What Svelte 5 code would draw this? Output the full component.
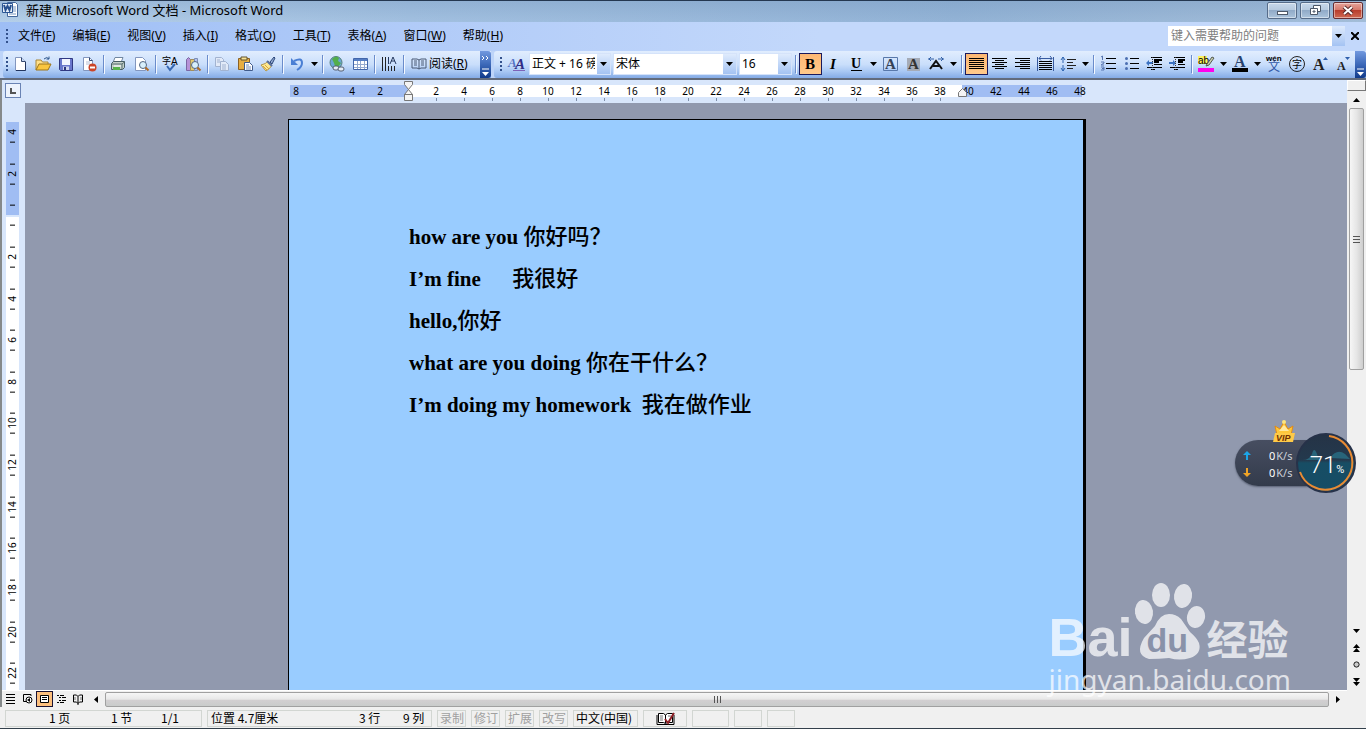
<script lang="ts">
  type Tool = { icon?: string; label?: string; kind?: 'sep' | 'arrow' | 'read'; on?: boolean };

  const sep: Tool = { kind: 'sep' };
  const arrow = (label: string): Tool => ({ kind: 'arrow', label });
  const tool = (icon: string, label: string, on = false): Tool => ({ icon, label, on });

  const menus = [
    ['文件', 'F'],
    ['编辑', 'E'],
    ['视图', 'V'],
    ['插入', 'I'],
    ['格式', 'O'],
    ['工具', 'T'],
    ['表格', 'A'],
    ['窗口', 'W'],
    ['帮助', 'H'],
  ];

  const standard: Tool[] = [
    tool('new', '新建'),
    tool('open', '打开'),
    tool('save', '保存'),
    tool('permission', '权限'),
    sep,
    tool('print', '打印'),
    tool('preview', '打印预览'),
    sep,
    tool('spelling', '拼写和语法'),
    tool('research', '信息检索'),
    sep,
    tool('copy', '复制'),
    tool('paste', '粘贴'),
    tool('brush', '格式刷'),
    sep,
    tool('undo', '撤消'),
    arrow('撤消列表'),
    sep,
    tool('link', '超链接'),
    tool('table', '插入表格'),
    sep,
    tool('direction', '文字方向'),
    sep,
    { kind: 'read' },
  ];

  const formatting: Tool[] = [
    sep,
    tool('bold', '加粗', true),
    tool('italic', '倾斜'),
    tool('underline', '下划线'),
    arrow('下划线样式'),
    tool('border', '字符边框'),
    tool('shade', '字符底纹'),
    tool('scale', '字符缩放'),
    arrow('缩放比例'),
    sep,
    tool('justify', '两端对齐', true),
    tool('center', '居中'),
    tool('right', '右对齐'),
    tool('distribute', '分散对齐'),
    tool('spacing', '行距'),
    arrow('行距选项'),
    sep,
    tool('numbers', '编号'),
    tool('bullets', '项目符号'),
    tool('outdent', '减少缩进量'),
    tool('indent', '增加缩进量'),
    sep,
    tool('highlight', '突出显示'),
    arrow('突出显示颜色'),
    tool('color', '字体颜色'),
    arrow('更多颜色'),
    tool('phonetic', '拼音指南'),
    tool('enclose', '带圈字符'),
    tool('grow', '增大字体'),
    tool('shrink', '缩小字体'),
  ];

  const serif = 'font-family="Liberation Serif, serif" font-weight="bold"';
  const cjk = 'font-family="Noto Sans CJK SC, sans-serif"';
  const lens = '<circle cx="10" cy="9" r="3.5" fill="#d7effc" stroke="#536681"/><path d="M12.5 11.5l3 3" stroke="#b06a25" stroke-width="2"/>';

  const icons: Record<string, string> = {
    new: '<path d="M3.5 1.5h6l4 4v9h-10z" fill="#fff" stroke="#8296be"/><path d="M9.5 1.5v4h4" fill="#c9daf3" stroke="#34486f"/><path d="M13.500 6v8.500H4" fill="none" stroke="#22355e"/>',
    open: '<path d="M1 14V4h5l1.500 2H13v3" fill="#ffe08a" stroke="#a98636"/><path d="M1 14l3-6h12l-3 6z" fill="#fac63f" stroke="#9b741c"/><path d="M9 3q3-3 5 0m0 0V.5m0 2.500h-2.500" fill="none" stroke="#31598d"/>',
    save: '<path d="M1.500 2.500h13v12h-12l-1-1z" fill="#6a77cc" stroke="#303982"/><path d="M4 3h8v6H4z" fill="#f2f4ff"/><path d="M5 10.500h6V14H5z" fill="#d0d6f0"/><path d="M6 11h2v3H6z" fill="#29327b"/>',
    permission: '<path d="M2.500 1.500h6l3 3v10h-9z" fill="#fff" stroke="#8296be"/><path d="M8.500 1.500v3h3" fill="none" stroke="#34486f"/><path d="M5 6h4M5 8h4" stroke="#b5bed3"/><circle cx="11.500" cy="11.500" r="4" fill="#cb4529"/><path d="M9 11.500h5" stroke="#fff" stroke-width="2"/>',
    print: '<path d="M5 1.500h8l-2 5H3z" fill="#fff" stroke="#7187a0"/><path d="M1.500 7.500l2-2h11v6l-2 2h-11z" fill="#c3d0c9" stroke="#465d65"/><path d="M2 8h10v5M12 8l2.500-2" fill="none" stroke="#566c6f"/><path d="M3 11h7v3H3z" fill="#57b34d"/><path d="M4 10h7" stroke="#fff"/>',
    preview: `<path d="M2.500 1.500h7l3 3v10h-10z" fill="#fff" stroke="#8296be"/>${lens}`,
    spelling: `<text x="0" y="8" font-size="9" ${cjk}>字</text><text x="9" y="9" font-size="10" font-family="Liberation Sans, sans-serif">A</text><path d="M5 10l3 4 5-6" fill="none" stroke="#3767b2" stroke-width="2"/>`,
    research: `<path d="M1.500 3.500l2-2 2 2v11h-4z" fill="#b692d8" stroke="#7b67a3"/><path d="M5.500 3.500h4v11h-4z" fill="#e5cb72" stroke="#a28e5a"/><path d="M9.500 2.500h3v12h-3z" fill="#b4c1f0" stroke="#7d8fb5"/>${lens}`,
    copy: '<g fill="#e2eaf8" stroke="#a2b3d0"><path d="M1.500 1.500h6l2 2v7h-8z"/><path d="M6.500 5.500h5l3 3v6h-8z"/><path d="M8 9h4M8 11h4M8 13h4M3 4h3M3 6h3"/></g>',
    paste: '<path d="M1.500 2.500h11v11h-11z" fill="#e6ad43" stroke="#8b6225"/><path d="M4 1h6v3H4z" fill="#f9e394" stroke="#61532e"/><path d="M7.500 6.500h5l3 3v5h-8z" fill="#fff" stroke="#405b8b"/><path d="M9 9h3M9 11h5M9 13h5" stroke="#748cba"/>',
    brush: '<path d="M10 6l4-5 1 1-3 6z" fill="#91a7d0" stroke="#2b4779"/><path d="M1 9q5-1 7-4l4 4q-2 4-6 6z" fill="#ffe98f" stroke="#b69849"/><path d="M7 5l5 5" stroke="#5870a1" stroke-width="2"/><path d="M3 10l4 4M5 9l4 4" stroke="#d6a741"/>',
    undo: '<path d="M5 5q8-4 8 2q0 4-5 7" fill="none" stroke="#4a7fd4" stroke-width="2"/><path d="M2 2v7h7z" fill="#4a7fd4"/>',
    link: '<circle cx="7" cy="6.500" r="6" fill="#6aa7d4" stroke="#567f7b"/><path d="M3 3q4-4 7-1L9 5l3 2-3 4-3-1-1-3z" fill="#53ae4a"/><g fill="#e5edf6" stroke="#555f72"><rect x="4" y="10" width="6" height="4" rx="2"/><rect x="9" y="11" width="6" height="4" rx="2"/></g>',
    table: '<path d="M1.500 2.500h14v11h-14z" fill="#fff" stroke="#4266aa"/><path d="M2 3h13v2H2z" fill="#547dc4"/><path d="M2 8.500h13M2 11.500h13M5.500 5v8M8.500 5v8M12.500 5v8" stroke="#94a9cf"/>',
    direction: '<path d="M1.500 1v14M4.500 1v14M7.500 10v5M10.500 10v5M13.500 10v5" stroke="#222"/><path d="M9 8l3-7 3 7m-5-3h4M7.500 1v7" fill="none" stroke="#26395f"/>',
    styles: `<text x="0" y="11" font-size="13" font-style="italic" fill="#5574c4" ${serif}>A</text><text x="7" y="13" font-size="15" font-style="italic" fill="#302d86" ${serif}>A</text><path d="M5 14.500h12" stroke="#7d62b8"/>`,
    bold: `<text x="3" y="13" font-size="15" ${serif}>B</text>`,
    italic: `<text x="5" y="13" font-size="15" font-style="italic" ${serif}>I</text>`,
    underline: `<text x="3" y="12" font-size="14" ${serif}>U</text><path d="M3 14.500h11" stroke="#000"/>`,
    border: `<path d="M1.500 1.500h14v13h-14z" fill="none" stroke="#5878aa"/><text x="3" y="13" font-size="15" fill="#344256" ${serif}>A</text>`,
    shade: `<path d="M2 2h13v13H2z" fill="#a5abb7"/><text x="3" y="13" font-size="15" fill="#333" ${serif}>A</text>`,
    scale: '<path d="M2 13l6-8 6 8M5 10h6" fill="none" stroke="#111" stroke-width="2"/><path d="M0 3h6m4 0h6M3 1L1 3l2 2M13 1l2 2-2 2" fill="none" stroke="#315fa5"/>',
    justify: '<path d="M1 2.500h15M1 4.500h15M1 6.500h15M1 8.500h15M1 10.500h15M1 12.500h15" stroke="#000"/>',
    center: '<path d="M1 2.500h15M4 4.500h9M1 6.500h15M4 8.500h9M1 10.500h15M4 12.500h9" stroke="#000"/>',
    right: '<path d="M1 2.500h15M6 4.500h10M1 6.500h15M6 8.500h10M1 10.500h15M6 12.500h10" stroke="#000"/>',
    distribute: '<path d="M2 5.500h13M2 7.500h13M2 9.500h13M2 11.500h13M2 13.500h13" stroke="#000"/><path d="M.5 1v14M16.500 1v14M2 2.500h13M4 0L2 2.500l2 2M13 0l2 2.500-2 2" fill="none" stroke="#385b9f"/>',
    spacing: '<path d="M3 1v6M3 9v6M1 4l2-3 2 3M1 12l2 3 2-3" fill="none" stroke="#2e65b1"/><path d="M7 3.500h9M7 6.500h6M7 9.500h9M7 12.500h6" stroke="#222"/>',
    numbers: '<path d="M6 2.500h10M6 7.500h10M6 12.500h10" stroke="#000"/><path d="M2.500 0v4M1 1l1.500-1M1 6h3v1L1 9h3M1 11h3v3H1m1-1.500h2" fill="none" stroke="#5877b2"/>',
    bullets: '<path d="M7 2.500h9M7 7.500h9M7 12.500h9" stroke="#000"/><g fill="#4c6fb1"><circle cx="3.500" cy="2.500" r="1.500"/><circle cx="3.500" cy="7.500" r="1.500"/><circle cx="3.500" cy="12.500" r="1.500"/></g>',
    outdent: '<path d="M5 1.500h11M8 4.500h8M8 6.500h5M8 8.500h8M1 11.500h15M5 13.500h4" stroke="#000"/><path d="M8 3.500h8M8 5.500h5" stroke="#000"/><path d="M0 7l3-3v2h4v2H3v2z" fill="#3b72c2"/><path d="M6.500 1v14" stroke="#333" stroke-dasharray="1 1"/>',
    indent: '<path d="M5 1.500h11M9 4.500h7M9 6.500h5M9 8.500h7M1 11.500h15M5 13.500h4" stroke="#000"/><path d="M9 3.500h7M9 5.500h5" stroke="#000"/><path d="M7 7L4 4v2H0v2h4v2z" fill="#3b72c2"/><path d="M6.500 1v14" stroke="#333" stroke-dasharray="1 1"/>',
    highlight: '<path d="M0 0h9v8H0z" fill="#fbf35e"/><text x="0" y="8" font-size="10" font-family="Liberation Sans, sans-serif">ab</text><path d="M9 8l5-7 2 1-5 7-3 1z" fill="#c8d0ab" stroke="#545a52"/><path d="M0 12h16v4H0z" fill="#f0e"/>',
    color: `<text x="2" y="11" font-size="16" fill="#28426e" ${serif}>A</text><path d="M0 12h16v4H0z" fill="#000"/>`,
    phonetic: `<text x="0" y="5" font-size="8" font-weight="bold" font-family="Liberation Sans, sans-serif">wén</text><text x="2" y="15" font-size="12" fill="#3158a8" ${cjk}>文</text>`,
    enclose: `<circle cx="8" cy="8" r="7.500" fill="none" stroke="#222"/><text x="3" y="12" font-size="10" ${cjk}>字</text>`,
    grow: `<text x="1" y="14" font-size="16" fill="#222" ${serif}>A</text><path d="M11 4l2.500-3L16 4z" fill="#2f5fac"/>`,
    shrink: `<text x="2" y="14" font-size="12" fill="#222" ${serif}>A</text><path d="M10 1h5l-2.500 3z" fill="#2f5fac"/>`,
    read: '<path d="M1 3h5l2 1 2-1h5v9h-5l-2 1-2-1H1zM8 4v9M3 5h3M3 7h3M3 9h3M10 5h3M10 7h3M10 9h3" fill="none" stroke="#4b5a74"/>',
    word: '<path d="M5.500 1.500h8l2 2v12h-10z" fill="#fff" stroke="#44679b"/><path d="M11 6h3M11 8h3M11 10h3M7 13h7" stroke="#7997c1"/><path d="M.5 2.500h10v9H.5z" fill="#e6effa" stroke="#2d5794"/><path d="M2 4l1.500 5L5.500 5l2 4L9 4" fill="none" stroke="#27508f" stroke-width="2"/>',
    normal: '<path d="M4 3.500h9M4 6.500h9M4 9.500h9M4 12.500h9" stroke="#000"/>',
    web: '<path d="M12 5V3.500H4.500v7H7" fill="none" stroke="#000"/><circle cx="10" cy="9" r="3" fill="#fff" stroke="#000"/><path d="M8 9l3-2v4z"/>',
    layout: '<path d="M4.500 4.500h8v7h-8z" fill="#fff" stroke="#000"/><path d="M6 6.500h5M6 8.500h5" stroke="#000"/>',
    outline: '<path d="M4 4.500h2m1 0h4M6 6.500h2m1 0h4M6 9.500h2m1 0h4M4 11.500h2m1 0h4" stroke="#000"/>',
    reading: '<path d="M3.500 4h3L8 5.500 9.500 4h3v7h-3L8 12.500 6.500 11h-3zM8 5.500V14" fill="none" stroke="#000"/><path d="M5 6v3M11 6v3" stroke="#777"/>',
    proof: '<path d="M1.500 2.500h5L8.500 4l2-1.500h5v9h-5l-2 1-2-1h-5z" fill="#fff" stroke="#000"/><path d="M0 4v9.500h17V4M8.500 4v8" fill="none" stroke="#000"/><path d="M3 5h3M3 7h3M3 9h3M11 5h3" stroke="#777"/><path d="M8 8l3 4 6-10" fill="none" stroke="#8f2027" stroke-width="2"/>',
  };

  const views = [
    ['normal', '普通视图'],
    ['web', 'Web 版式视图'],
    ['layout', '页面视图'],
    ['outline', '大纲视图'],
    ['reading', '阅读版式'],
  ];

  const marks = [8, 6, 4, 2, 0, ...Array.from({ length: 24 }, (_, i) => (i + 1) * 2)];
  const sideMarks = [4, 2, 0, ...Array.from({ length: 11 }, (_, i) => (i + 1) * 2)];

  const lines = [
    ['how are you ', '你好吗？'],
    ['I’m fine      ', '我很好'],
    ['hello,', '你好'],
    ['what are you doing ', '你在干什么？'],
    ['I’m doing my homework  ', '我在做作业'],
  ];

  let view = $state('layout');
</script>

{#snippet glyph(name: string)}
  <svg class="glyph" viewBox="0 0 17 16" aria-hidden="true">{@html icons[name]}</svg>
{/snippet}

{#snippet down()}
  <svg class="down" viewBox="0 0 7 4" aria-hidden="true"><path d="M0 0h7L3.500 4z" /></svg>
{/snippet}

{#snippet tools(items: Tool[])}
  {#each items as item}
    {#if item.kind === 'sep'}
      <span class="sep"></span>
    {:else if item.kind === 'arrow'}
      <button class="more" aria-label={item.label}>{@render down()}</button>
    {:else if item.kind === 'read'}
      <button class="read">{@render glyph('read')}<span>阅读(<u>R</u>)</span></button>
    {:else}
      <button class="tool" class:on={item.on} aria-label={item.label}>{@render glyph(item.icon ?? '')}</button>
    {/if}
  {/each}
{/snippet}

<div class="window">
  <header class="title">
    {@render glyph('word')}
    <h1>新建 Microsoft Word 文档 - Microsoft Word</h1>
    <div class="controls">
      <button aria-label="最小化">
        <svg viewBox="0 0 28 15"><rect x="9.500" y="8.500" width="10" height="3" fill="#fff" stroke="#4d5868" /></svg>
      </button>
      <button aria-label="还原">
        <svg viewBox="0 0 28 15"><g fill="#fff" stroke="#4d5868"><path d="M12.500 2.500h7v6h-7z" /><path d="M9.500 5.500h7v6h-7z" /><path d="M12 8h2v1h-2z" /></g></svg>
      </button>
      <button class="close" aria-label="关闭">
        <svg viewBox="0 0 28 15"><path d="M10 4l8 7M18 4l-8 7" stroke="#582a29" stroke-width="4" /><path d="M10 4l8 7M18 4l-8 7" stroke="#fff" stroke-width="2" /></svg>
      </button>
    </div>
  </header>

  <nav class="menu">
    <span class="grip"></span>
    <div class="menu-items">
      {#each menus as [name, key]}
        <button>{name}(<u>{key}</u>)</button>
      {/each}
    </div>
    <div class="ask">
      <input type="text" placeholder="键入需要帮助的问题" aria-label="键入需要帮助的问题" />
      <button class="drop" aria-label="最近的问题">{@render down()}</button>
    </div>
    <button class="close-doc" aria-label="关闭窗口">
      <svg viewBox="0 0 8 8"><path d="M0 0l8 8M8 0L0 8" stroke="#000" stroke-width="2" /></svg>
    </button>
  </nav>

  <div class="bars">
    <div class="bar standard">
      <span class="grip"></span>
      {@render tools(standard)}
      <button class="cap" aria-label="工具栏选项">
        <svg viewBox="0 0 11 26"><path d="M2 4l2 2-2 2M6 4l2 2-2 2M2 17h7" fill="none" stroke="#fff" /><path d="M2 20h7l-3.500 4z" fill="#fff" /></svg>
      </button>
    </div>
    <div class="bar formatting">
      <span class="grip"></span>
      <button class="tool" aria-label="样式和格式">{@render glyph('styles')}</button>
      <div class="combos">
        <div class="combo style">
          <select aria-label="样式"><option>正文 + 16 磅</option></select>
          <span class="drop">{@render down()}</span>
        </div>
        <div class="combo font">
          <select aria-label="字体"><option>宋体</option></select>
          <span class="drop">{@render down()}</span>
        </div>
        <div class="combo size">
          <select aria-label="字号"><option>16</option></select>
          <span class="drop">{@render down()}</span>
        </div>
      </div>
      {@render tools(formatting)}
      <button class="cap" aria-label="工具栏选项">
        <svg viewBox="0 0 11 26"><path d="M2 17h7" stroke="#fff" /><path d="M2 20h7l-3.500 4z" fill="#fff" /></svg>
      </button>
    </div>
  </div>

  <div class="work">
    <div class="main">
      <div class="ruler">
        <button class="tab-stop" aria-label="左对齐制表符"><svg viewBox="0 0 14 14"><path d="M5 4v5h5" fill="none" stroke="#555" stroke-width="2" /></svg></button>
        <div class="scale">
          {#each marks as mark, i}
            <span class:tick={i > 4 && i < 24}>{mark || ''}</span>
          {/each}
          <svg class="marker indent" viewBox="0 0 9 21"><path d="M.5.500h8v3l-4 5 4 5h-8l4-5-4-5zM.5 13.500h8v6h-8z" fill="#f4f4f4" stroke="#777" /></svg>
          <svg class="marker margin" viewBox="0 0 9 9"><path d="M.5 8.500V4.500l4-4 4 4v4z" fill="#f4f4f4" stroke="#777" /></svg>
        </div>
      </div>
      <div class="area">
        <div class="side">
          <div class="side-scale">
            {#each sideMarks as mark}
              <span>{mark || ''}</span>
            {/each}
          </div>
        </div>
        <div class="desk">
          <article class="paper">
            {#each lines as [english, chinese]}
              <p>{english}<span lang="zh">{chinese}</span></p>
            {/each}
          </article>
        </div>
      </div>
      <div class="foot">
        {#each views as [name, label]}
          <button class="view" class:on={view === name} aria-label={label} onclick={() => (view = name)}>{@render glyph(name)}</button>
        {/each}
        <button class="step" aria-label="向左滚动"><svg viewBox="0 0 4 7"><path d="M4 0v7L0 3.500z" /></svg></button>
        <div class="thumb wide"><i></i><i></i><i></i></div>
        <button class="step" aria-label="向右滚动"><svg viewBox="0 0 4 7"><path d="M0 0v7l4-3.500z" /></svg></button>
      </div>
    </div>
    <div class="rail">
      <button class="split" aria-label="拆分"></button>
      <button class="rail-step" aria-label="向上滚动"><svg viewBox="0 0 7 4"><path d="M0 4h7L3.500 0z" /></svg></button>
      <div class="track"><div class="thumb tall"><i></i><i></i><i></i></div></div>
      <button class="rail-step" aria-label="向下滚动">{@render down()}</button>
      <button class="rail-step" aria-label="前一页"><svg viewBox="0 0 7 8"><path d="M0 4h7L3.500 0zM0 8h7L3.500 4z" /></svg></button>
      <button class="rail-step" aria-label="选择浏览对象"><svg viewBox="0 0 8 8"><circle cx="4" cy="4" r="3" fill="#ccc" stroke="#000" /></svg></button>
      <button class="rail-step" aria-label="下一页"><svg viewBox="0 0 7 8"><path d="M0 0h7L3.500 4zM0 4h7L3.500 8z" /></svg></button>
    </div>
  </div>

  <footer class="status">
    <div class="panel place"><span>1 页</span><span>1 节</span><span>1/1</span></div>
    <div class="panel position"><span>位置 4.7厘米</span><span>3 行</span><span>9 列</span></div>
    {#each ['录制', '修订', '扩展', '改写'] as mode}
      <div class="panel mode">{mode}</div>
    {/each}
    <div class="panel lang">中文(中国)</div>
    <div class="panel proof">{@render glyph('proof')}</div>
    <div class="panel blank"></div>
    <div class="panel small"></div>
    <div class="panel small"></div>
  </footer>

  <aside class="meter">
    <div class="speed">
      <span>
        <svg viewBox="0 0 8 9"><path d="M4 0l4 4H5v5H3V4H0z" fill="#1ca5e8" /></svg>
        <em>0</em>K/s
      </span>
      <span>
        <svg viewBox="0 0 8 9"><path d="M4 9L0 5h3V0h2v5h3z" fill="#f0a426" /></svg>
        <em>0</em>K/s
      </span>
    </div>
    <svg class="crown" viewBox="0 0 24 24">
      <path d="M3 7l5 3 4-7 4 7 5-3-2 9H5z" fill="#ffc83a" stroke="#e18b18" />
      <path d="M7 12l5-6 5 6z" fill="#ffe9a0" />
      <circle cx="12" cy="3" r="2" fill="#ffe57a" />
      <path d="M3 14h20l-2 9H1z" fill="#ffca48" />
      <text x="4" y="22" font-size="9" font-weight="bold" font-style="italic" font-family="Liberation Sans, sans-serif" fill="#713100">VIP</text>
    </svg>
    <div class="gauge">
      <svg viewBox="0 0 60 60">
        <defs>
          <linearGradient id="water" x1="0" y1="0" x2="0" y2="1">
            <stop offset="0" stop-color="#253346" />
            <stop offset=".45" stop-color="#24394d" />
            <stop offset=".5" stop-color="#174d64" />
            <stop offset="1" stop-color="#164d66" />
          </linearGradient>
        </defs>
        <circle cx="30" cy="30" r="29" fill="url(#water)" stroke="#273249" stroke-width="2" />
        <path d="M7 27q6 0 9-6 2-8 5 0 1 6 6 6zM34 25q7-10 15-4l5 5z" fill="#28647a" />
        <path d="M33 3a27 27 0 1 1-29 36" fill="none" stroke="#e88b34" stroke-width="2" />
      </svg>
      <p>71<small>%</small></p>
    </div>
  </aside>

  <aside class="brand">
    <div class="brand-row">
      <span class="bai">Bai</span>
      <div class="paw">
        <svg viewBox="0 0 74 80">
          <g fill="#fff">
            <ellipse cx="11" cy="31" rx="9" ry="12" transform="rotate(-8 11 31)" />
            <ellipse cx="28" cy="14" rx="9" ry="12" />
            <ellipse cx="50" cy="15" rx="9" ry="12" transform="rotate(8 50 15)" />
            <ellipse cx="63" cy="36" rx="9" ry="11" transform="rotate(12 63 36)" />
            <path d="M36 33q-9 0-14 12L11 57q-10 17 5 21 10 0 20-1 11 3 21 0 12-4 9-15-2-5-9-11L48 38q-5-5-12-5z" />
          </g>
        </svg>
        <span>du</span>
      </div>
      <span class="jing">经验</span>
    </div>
    <div class="url">jingyan.baidu.com</div>
  </aside>
</div>

<style>
  :global(body) {
    margin: 0;
  }

  .window {
    position: relative;
    display: flex;
    flex-direction: column;
    box-sizing: border-box;
    min-height: 100vh;
    overflow: hidden;
    border-bottom: 1px solid #33404c;
    background: #d8e6fb;
    font-family: 'Noto Sans', 'Noto Sans CJK SC', sans-serif;
    font-size: 12px;
    line-height: 16px;
    color: #000;
  }

  button {
    display: flex;
    align-items: center;
    justify-content: center;
    flex: none;
    box-sizing: border-box;
    margin: 0;
    padding: 0;
    border: 0;
    background: none;
    font: inherit;
    color: inherit;
  }

  svg {
    display: block;
    flex: none;
  }

  .glyph {
    width: 17px;
    height: 16px;
    overflow: visible;
  }

  .down {
    width: 7px;
    height: 4px;
  }

  .title {
    display: flex;
    align-items: flex-start;
    box-sizing: border-box;
    height: 22px;
    padding: 0 3px 0 2px;
    border-top: 1px solid #243750;
    background:
      linear-gradient(rgba(110, 145, 185, 0.3), transparent),
      linear-gradient(90deg, #b5cfe9, #a2c0e0 30%, #93b3d6 70%, #a3bdd8);
  }

  .title h1 {
    flex: 1;
    margin: 0 0 0 7px;
    font-size: 13px;
    font-weight: 400;
    line-height: 18px;
  }

  .controls {
    display: flex;
    gap: 3px;
    margin-top: 1px;
  }

  .controls button {
    width: 30px;
    height: 17px;
    border: 1px solid #566c89;
    border-radius: 2px;
    background: linear-gradient(#c7d8eb, #b5c9de 48%, #91abc8 50%, #acc4dc);
    box-shadow: inset 0 0 0 1px rgba(255, 255, 255, 0.45);
  }

  .controls svg {
    width: 28px;
    height: 15px;
  }

  .controls .close {
    border-color: #672e32;
    background: linear-gradient(#e5a39a, #d57769 48%, #b93e2d 50%, #cf6952);
  }

  .menu {
    display: flex;
    align-items: center;
    box-sizing: border-box;
    height: 29px;
    padding: 0 7px 2px 5px;
    background: linear-gradient(90deg, #9ebef5, #c3d8fb 60%);
  }

  .menu-items {
    display: flex;
    flex: 1;
    gap: 17px;
    padding-left: 9px;
  }

  .grip {
    flex: none;
    width: 4px;
    height: 16px;
    background: linear-gradient(#33518c, #33518c) 1px 1px / 2px 2px no-repeat,
      linear-gradient(#33518c, #33518c) 1px 5px / 2px 2px no-repeat,
      linear-gradient(#33518c, #33518c) 1px 9px / 2px 2px no-repeat,
      linear-gradient(#33518c, #33518c) 1px 13px / 2px 2px no-repeat;
  }

  .ask {
    display: flex;
    width: 177px;
    height: 20px;
    background: #fff;
  }

  .ask input {
    flex: 1;
    min-width: 0;
    padding: 0 3px;
    border: 0;
    background: none;
    font: inherit;
  }

  .ask input::placeholder {
    color: #808080;
  }

  .drop {
    display: flex;
    align-items: center;
    justify-content: center;
    flex: none;
    width: 13px;
    background: linear-gradient(#dfebfd, #a4c3f3);
  }

  .close-doc {
    margin-left: 6px;
  }

  .close-doc svg {
    width: 8px;
    height: 8px;
  }

  .bars {
    display: flex;
    gap: 3px;
    height: 27px;
    padding-left: 3px;
    border-bottom: 2px solid #626b7c;
    background: #bdd4f9;
  }

  .bar {
    display: flex;
    align-items: center;
    box-sizing: border-box;
    padding-bottom: 1px;
    border-radius: 3px 0 0 3px;
    background: linear-gradient(#e1edfe, #c9defb 50%, #a9c8f4 75%, #84abe6);
  }

  .standard {
    width: 491px;
    padding-left: 2px;
  }

  .formatting {
    flex: 1;
    padding-left: 5px;
  }

  .formatting .grip {
    margin-right: 2px;
  }

  .tool {
    width: 23px;
    height: 22px;
  }

  .tool.on {
    border: 1px solid #1a1a5c;
    background: linear-gradient(#fdb873, #ffc98a);
  }

  .sep {
    flex: none;
    width: 1px;
    height: 18px;
    margin: 0 3px 0 2px;
    background: #6a8ccb;
    box-shadow: 1px 1px #f3f8ff;
  }

  .more {
    width: 11px;
    height: 22px;
  }

  .read {
    gap: 1px;
    height: 22px;
    padding-left: 4px;
  }

  .cap {
    align-self: stretch;
    width: 11px;
    margin: 0 0 -1px auto;
    border-radius: 0 3px 3px 0;
    background: linear-gradient(#7299df, #3c68b8 50%, #103989);
  }

  .cap svg {
    width: 11px;
    height: 26px;
  }

  .combos {
    display: flex;
    gap: 2px;
    margin: 0 1px;
  }

  .combo {
    display: flex;
    box-sizing: border-box;
    height: 22px;
    border: 1px solid #d5e3fa;
    background: #fff;
  }

  .combo select {
    flex: 1;
    min-width: 0;
    padding: 0 2px;
    border: 0;
    background: none;
    font: inherit;
    color: inherit;
    appearance: none;
  }

  .style {
    width: 82px;
  }

  .font {
    width: 124px;
  }

  .size {
    width: 53px;
  }

  .work {
    display: flex;
    flex: 1;
  }

  .main {
    display: flex;
    flex: 1;
    flex-direction: column;
    min-width: 0;
    border-left: 2px solid #85898a;
    background: #d8e6fb;
  }

  .ruler {
    display: flex;
    height: 23px;
  }

  .tab-stop {
    width: 16px;
    height: 15px;
    margin: 3px 4px 0 3px;
    border: 1px solid #6a83b4;
    background: #edf3fd;
  }

  .tab-stop svg {
    width: 14px;
    height: 14px;
  }

  .scale {
    position: relative;
    display: flex;
    align-items: flex-start;
    width: 812px;
    height: 12px;
    margin: 5px auto 0;
    padding-left: 4px;
    background: linear-gradient(90deg, transparent 12px, #a0bdf3 12px 130px, #fff 130px 684px, #a0bdf3 684px 804px, transparent 804px);
    font-size: 10px;
    line-height: 12px;
  }

  .scale span {
    width: 28px;
    height: 16px;
    text-align: center;
  }

  .tick {
    background: linear-gradient(#7d8ea8, #7d8ea8) 50% 100% / 1px 3px no-repeat;
  }

  .marker {
    position: absolute;
  }

  .marker.indent {
    top: -4px;
    left: 126px;
    width: 9px;
    height: 21px;
  }

  .marker.margin {
    top: 3px;
    left: 680px;
    width: 9px;
    height: 9px;
  }

  .area {
    display: flex;
    flex: 1;
  }

  .side {
    display: flex;
    flex-direction: column;
    box-sizing: border-box;
    width: 23px;
    padding: 0 6px 0 4px;
    overflow: hidden;
  }

  .side-scale {
    display: flex;
    flex: 1;
    flex-direction: column;
    padding-top: 8px;
    margin-bottom: -4px;
    background: linear-gradient(transparent 19px, #a0bdf3 19px 112px, #d8e6fb 112px 114px, #fff 114px);
    font-size: 10px;
    line-height: 13px;
  }

  .side-scale span {
    flex: 1;
    width: 13px;
    background:
      linear-gradient(#000, #000) 4px 25% / 5px 1px no-repeat,
      linear-gradient(#000, #000) 4px 75% / 5px 1px no-repeat;
    text-align: center;
    writing-mode: vertical-rl;
    transform: rotate(180deg);
  }

  .side-scale span:first-child {
    background: linear-gradient(#000, #000) 4px 25% / 5px 1px no-repeat;
  }

  .desk {
    display: flex;
    flex: 1;
    justify-content: center;
    padding: 16px 0 0 2px;
    background: #9199ae;
  }

  .paper {
    box-sizing: border-box;
    width: 798px;
    padding: 96px 120px 0;
    border: 1px solid #000;
    border-right-width: 3px;
    border-bottom: 0;
    background: #99ccff;
  }

  .paper p {
    margin: 0;
    font-family: 'Liberation Serif', 'Noto Sans CJK SC', serif;
    font-size: 21px;
    font-weight: 700;
    line-height: 42px;
    white-space: pre-wrap;
  }

  .paper p span {
    font-size: 22px;
    font-weight: 500;
    line-height: 24px;
  }

  .foot {
    display: flex;
    align-items: center;
    height: 16px;
    border-top: 1px solid #fff;
    background: #f0f0f0;
  }

  .view {
    width: 17px;
    height: 16px;
  }

  .view.on {
    border: 1px solid #1b1333;
    background: #fdc07d;
  }

  .step {
    width: 18px;
    height: 16px;
  }

  .step svg {
    width: 4px;
    height: 7px;
  }

  .thumb {
    display: flex;
    align-items: center;
    justify-content: center;
    gap: 2px;
    box-sizing: border-box;
    border: 1px solid #a0a0a0;
    border-radius: 2px;
  }

  .thumb i {
    width: 1px;
    height: 7px;
    background: #555;
  }

  .wide {
    flex: 1;
    height: 15px;
    background: linear-gradient(#f6f6f6, #e8e8e8 48%, #d2cfd1 55%, #c9cccb);
  }

  .rail {
    display: flex;
    flex-direction: column;
    align-items: center;
    box-sizing: border-box;
    width: 19px;
    padding-bottom: 17px;
    background: #f0f0f0;
  }

  .split {
    align-self: stretch;
    height: 11px;
    border: 1px solid;
    border-color: #fff #777 #777 #fff;
  }

  .rail-step {
    width: 17px;
    height: 17px;
  }

  .rail-step svg {
    width: 7px;
    height: auto;
  }

  .track {
    flex: 1;
    width: 15px;
  }

  .tall {
    flex-direction: column;
    height: 51%;
    background: linear-gradient(90deg, #f6f6f6, #e6e6e6 50%, #cecece);
  }

  .tall i {
    width: 7px;
    height: 1px;
  }

  .status {
    display: flex;
    gap: 5px;
    padding: 3px 5px 1px;
    background: #f0f0f0;
    font-family: 'Noto Sans CJK SC', sans-serif;
  }

  .panel {
    box-sizing: border-box;
    height: 17px;
    border: 1px solid #d2d6d2;
    line-height: 14px;
    white-space: nowrap;
  }

  .place {
    display: flex;
    width: 197px;
    padding-left: 43px;
  }

  .place span:first-child {
    width: 62px;
  }

  .place span:nth-child(2) {
    width: 50px;
  }

  .position {
    display: flex;
    width: 225px;
    padding-left: 3px;
  }

  .position span:first-child {
    width: 148px;
  }

  .position span:nth-child(2) {
    width: 44px;
  }

  .mode {
    width: 29px;
    padding-left: 2px;
    color: #a0a0a0;
  }

  .lang {
    width: 65px;
    padding-left: 2px;
  }

  .proof {
    display: flex;
    justify-content: center;
    width: 44px;
  }

  .blank {
    width: 37px;
  }

  .small {
    width: 28px;
  }

  .meter {
    position: absolute;
    right: 10px;
    bottom: 235px;
    display: flex;
    align-items: center;
  }

  .speed {
    width: 75px;
    height: 46px;
    box-sizing: border-box;
    margin-right: -14px;
    padding: 7px 0 0 8px;
    border-radius: 23px 0 0 23px;
    background: linear-gradient(#474e61, #333b4b);
    box-shadow: 0 1px 2px #596174;
    color: #ccd1da;
    font-size: 11px;
    line-height: 17px;
  }

  .speed span {
    display: flex;
    align-items: center;
  }

  .speed svg {
    width: 8px;
    height: 9px;
    margin-right: 18px;
  }

  .speed em {
    margin-right: 1px;
    font-style: normal;
    color: #fff;
  }

  .crown {
    position: absolute;
    top: -14px;
    left: 37px;
    width: 24px;
    height: 24px;
  }

  .gauge {
    position: relative;
    width: 60px;
    height: 60px;
  }

  .gauge svg {
    width: 60px;
    height: 60px;
  }

  .gauge p {
    position: absolute;
    inset: 0;
    margin: 0;
    padding-left: 2px;
    font-family: Roboto, sans-serif;
    font-size: 24px;
    font-weight: 300;
    line-height: 64px;
    text-align: center;
    color: #fff;
  }

  .gauge small {
    font-size: 11px;
    font-weight: 400;
  }

  .brand {
    position: absolute;
    right: 75px;
    bottom: 31px;
    color: #fff;
    opacity: 0.72;
    pointer-events: none;
  }

  .brand-row {
    display: flex;
    align-items: flex-end;
    height: 80px;
  }

  .bai {
    font-family: 'Liberation Sans', sans-serif;
    font-size: 54px;
    font-weight: 700;
    line-height: 48px;
  }

  .paw {
    position: relative;
    width: 74px;
  }

  .paw svg {
    width: 74px;
    height: 80px;
  }

  .paw span {
    position: absolute;
    bottom: 4px;
    left: 14px;
    font-family: 'Liberation Sans', sans-serif;
    font-size: 34px;
    font-weight: 700;
    line-height: 34px;
    color: #8790a8;
  }

  .jing {
    font-family: 'Noto Sans CJK SC', sans-serif;
    font-size: 41px;
    font-weight: 700;
    line-height: 48px;
  }

  .url {
    font-family: 'Noto Sans', sans-serif;
    font-size: 28px;
    line-height: 36px;
  }
</style>
